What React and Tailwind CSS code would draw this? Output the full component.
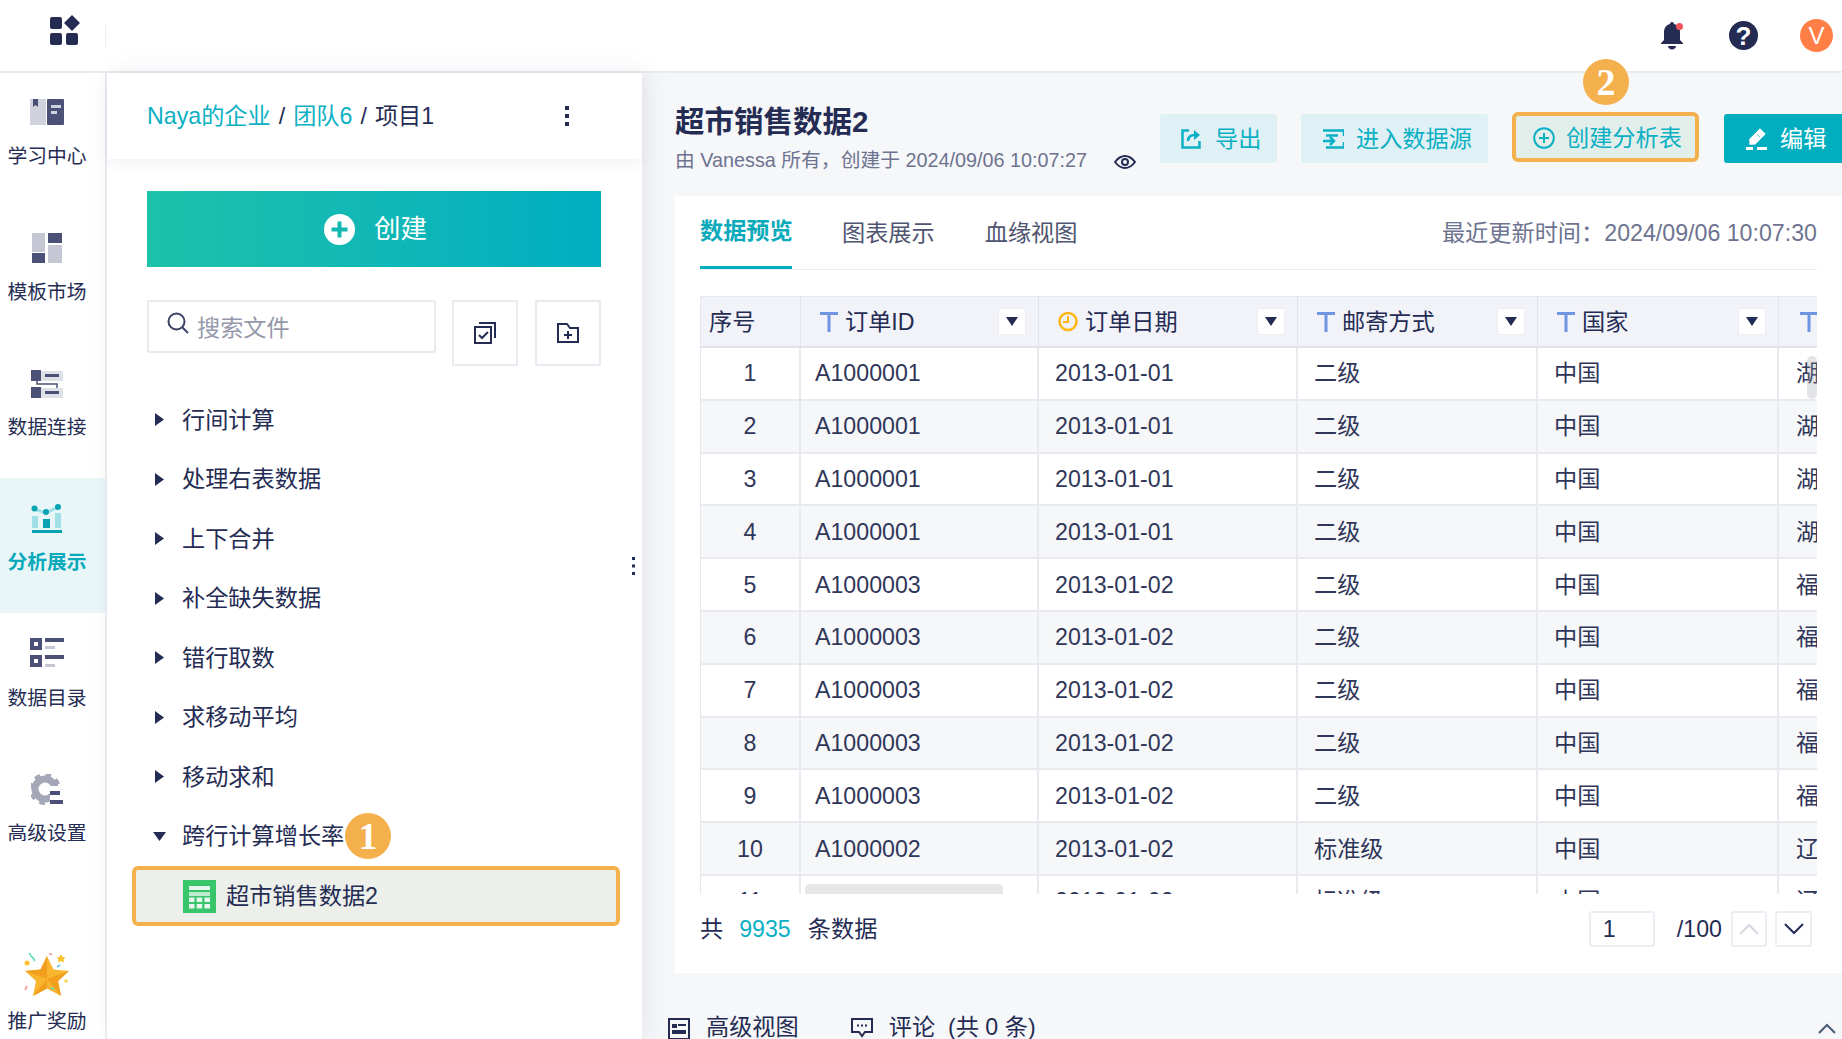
import React from "react";

const NAVY = "#252c54";

const BookIcon = () => (
  <svg width="34" height="26" viewBox="0 0 34 26">
    <rect x="0" y="0" width="16" height="26" fill="#d0d3de" />
    <path d="M3 0h5v8l-2.5-2L3 8z" fill="#4b5076" />
    <rect x="17" y="0" width="17" height="26" rx="1" fill="#4b5076" />
    <rect x="21" y="6" width="10" height="3" fill="#d0d3de" />
    <rect x="21" y="12" width="6" height="3" fill="#d0d3de" />
  </svg>
);

const TemplateIcon = () => (
  <svg width="30" height="30" viewBox="0 0 30 30">
    <rect x="0" y="0" width="13" height="19" fill="#c5c8d4" />
    <rect x="0" y="20" width="13" height="10" fill="#4b5076" />
    <rect x="16" y="0" width="14" height="10" fill="#4b5076" />
    <rect x="16" y="12" width="14" height="18" fill="#c5c8d4" />
  </svg>
);

const ConnectIcon = () => (
  <svg width="32" height="28" viewBox="0 0 32 28">
    <rect x="10" y="1" width="22" height="10" fill="#dfe1e9" />
    <rect x="10" y="18" width="22" height="10" fill="#dfe1e9" />
    <rect x="0" y="0" width="10" height="11" fill="#4b5076" />
    <rect x="0" y="17" width="10" height="11" fill="#4b5076" />
    <rect x="14" y="4" width="14" height="3" fill="#4b5076" />
    <rect x="14" y="21" width="14" height="3" fill="#4b5076" />
    <path d="M6 11v3h20v4" fill="none" stroke="#4b5076" strokeWidth="1.5" />
  </svg>
);

const AnalysisIcon = () => (
  <svg width="32" height="30" viewBox="0 0 32 30">
    <path d="M3 5l12 4 12-6" fill="none" stroke="#9fdfe6" strokeWidth="3" />
    <rect x="1" y="12" width="6" height="12" fill="#9fdfe6" />
    <rect x="12" y="15" width="7" height="9" fill="#05a3b4" />
    <rect x="24" y="9" width="6" height="15" fill="#9fdfe6" />
    <rect x="1" y="26" width="30" height="3" fill="#05a3b4" />
    <circle cx="3.5" cy="4.5" r="3" fill="#05a3b4" />
    <circle cx="15" cy="8" r="3" fill="#05a3b4" />
    <circle cx="27" cy="3" r="3" fill="#05a3b4" />
  </svg>
);

const CatalogIcon = () => (
  <svg width="34" height="30" viewBox="0 0 34 30">
    <rect x="2" y="2" width="8" height="8" fill="none" stroke="#4b5076" strokeWidth="4" />
    <rect x="2" y="19" width="8" height="8" fill="none" stroke="#4b5076" strokeWidth="4" />
    <rect x="15" y="0" width="19" height="4" fill="#4b5076" />
    <rect x="15" y="8" width="10" height="3" fill="#c5c8d4" />
    <rect x="15" y="17" width="19" height="4" fill="#4b5076" />
    <rect x="15" y="26" width="10" height="3" fill="#c5c8d4" />
  </svg>
);

const GearIcon = () => (
  <svg width="32" height="32" viewBox="0 0 32 32">
    <circle cx="14" cy="15" r="10" fill="none" stroke="#a4a7b8" strokeWidth="7" />
    <circle cx="14" cy="15" r="14" fill="none" stroke="#a4a7b8" strokeWidth="4" strokeDasharray="5.5 5.5" />
    <rect x="19" y="12" width="13" height="20" fill="#fff" />
    <rect x="19" y="17" width="10" height="4" fill="#4b5076" />
    <rect x="19" y="26" width="13" height="4" fill="#4b5076" />
  </svg>
);

const StarIcon = () => (
  <svg width="46" height="46" viewBox="0 0 46 46">
    <path d="M23 3l6.5 13.500L45 18l-11 10 3 15-14-7.500L9 43l3-15L1 18l15.500-1.500z" fill="#f9b52e" />
    <path d="M23 3v23L1 18l15.500-1.500zM45 18L23 26l14 17-3-15zM23 26L9 43l14-7.500z" fill="#f29f1e" />
    <path d="M5 0c2 1 1 3 3 4s2 3 3 4" fill="none" stroke="#4fe0b5" strokeWidth="1.5" />
    <path d="M25 0l3 2" stroke="#f58a8a" strokeWidth="1.5" />
    <path d="M37 1l1.500 3 3 .5-2 2 .5 3-3-1.500-3 1.500.5-3-2-2 3-.5z" fill="#fbc02d" />
    <circle cx="3" cy="10" r="2.5" fill="#fbc02d" />
    <path d="M33 14l3-2" stroke="#38bdf8" strokeWidth="1.5" />
    <circle cx="42" cy="28" r="1.8" fill="#fbd34d" />
    <path d="M3 33c-1 2-1 3-2 4" stroke="#f58a8a" strokeWidth="1.5" fill="none" />
    <path d="M27 35l3 1" stroke="#4fe0b5" strokeWidth="1.5" />
  </svg>
);

const navItems = [
  { label: "学习中心", icon: <BookIcon />, pad: "pt-[24px]", gap: "mt-[14px]" },
  { label: "模板市场", icon: <TemplateIcon />, pad: "pt-[25px]", gap: "mt-[14px]" },
  { label: "数据连接", icon: <ConnectIcon />, pad: "pt-[26px]", gap: "mt-[13px]" },
  { label: "分析展示", icon: <AnalysisIcon />, pad: "pt-[26px]", gap: "mt-[13px]", active: true },
  { label: "数据目录", icon: <CatalogIcon />, pad: "pt-[25px]", gap: "mt-[15px]" },
  { label: "高级设置", icon: <GearIcon />, pad: "pt-[27px]", gap: "mt-[13px]" },
];

const treeItems = ["行间计算", "处理右表数据", "上下合并", "补全缺失数据", "错行取数", "求移动平均", "移动求和"];

const rows = [
  [1, "A1000001", "2013-01-01", "二级", "中国", "湖"],
  [2, "A1000001", "2013-01-01", "二级", "中国", "湖"],
  [3, "A1000001", "2013-01-01", "二级", "中国", "湖"],
  [4, "A1000001", "2013-01-01", "二级", "中国", "湖"],
  [5, "A1000003", "2013-01-02", "二级", "中国", "福"],
  [6, "A1000003", "2013-01-02", "二级", "中国", "福"],
  [7, "A1000003", "2013-01-02", "二级", "中国", "福"],
  [8, "A1000003", "2013-01-02", "二级", "中国", "福"],
  [9, "A1000003", "2013-01-02", "二级", "中国", "福"],
  [10, "A1000002", "2013-01-02", "标准级", "中国", "辽"],
  [11, "A1000002", "2013-01-02", "标准级", "中国", "辽"],
];

const TIcon = () => (
  <svg width="18" height="20" viewBox="0 0 18 20" className="shrink-0">
    <path d="M0 1.500h18M9 1.500V20" fill="none" stroke="#6f95e2" strokeWidth="3" />
  </svg>
);

const ClockIcon = () => (
  <svg width="20" height="21" viewBox="0 0 20 21" className="shrink-0">
    <circle cx="10" cy="10.500" r="8.500" fill="none" stroke="#fdb614" strokeWidth="2.5" />
    <path d="M10 5v6H5" fill="none" stroke="#fdb614" strokeWidth="2" />
  </svg>
);

const Caret = () => (
  <div className="w-[28px] h-[27px] bg-white border border-[#eceef3] flex items-center justify-center">
    <svg width="12" height="9" viewBox="0 0 12 9">
      <path d="M0 0h12L6 9z" fill={NAVY} />
    </svg>
  </div>
);

const HeadCell = ({ icon, label }) => (
  <div className="h-[49px] flex items-center pl-[19px] border-r border-[#e2e4ea]">
    {icon}
    <span className="ml-[7px]">{label}</span>
    <div className="ml-auto mr-[12px]">
      <Caret />
    </div>
  </div>
);

const Badge = ({ n, className }) => (
  <div className={`absolute w-[46px] h-[46px] rounded-full bg-[#f5b04e] flex items-center justify-center text-white text-[38px] font-bold font-['Liberation_Serif',serif] ${className}`}>
    {n}
  </div>
);

const App = () => {
  return (
    <div className="w-full h-screen flex flex-col overflow-hidden bg-white text-[#252c54] text-[23.2px] leading-[30px] font-['Liberation_Sans','Noto_Sans_CJK_SC',sans-serif]">
      {/* top bar */}
      <div className="h-[73px] shrink-0 flex items-center border-b-2 border-[#e9ebef] bg-white">
        <div className="w-[107px] h-full flex items-start pt-[15px] pl-[50px]">
          <svg width="30" height="30" viewBox="0 0 30 30">
            <rect x="0" y="2" width="12" height="12" rx="2" fill={NAVY} />
            <rect x="0" y="18" width="12" height="12" rx="2" fill={NAVY} />
            <rect x="16" y="18" width="12" height="12" rx="2" fill={NAVY} />
            <path d="M22 0l8 8-8 8-8-8z" fill={NAVY} />
          </svg>
        </div>
        <div className="w-px h-[22px] bg-[#eceef2] -ml-[2px]" />
        <div className="ml-auto flex items-center pr-[9px]">
          <div className="relative w-[24px] h-[30px]">
            <svg width="24" height="30" viewBox="0 0 24 30">
              <path d="M12 1c1.500 0 2 1 2 2 4 1 6 4 6 8v8l3 3v1H1v-1l3-3v-8c0-4 2-7 6-8 0-1 .5-2 2-2z" fill={NAVY} />
              <path d="M8 25h8c0 2-2 3.500-4 3.500S8 27 8 25z" fill={NAVY} />
            </svg>
            <div className="absolute top-[2px] right-[1px] w-[7px] h-[7px] rounded-full bg-[#f0545c]" />
          </div>
          <div className="w-[29px] h-[29px] ml-[45px] rounded-full bg-[#252c54] text-white text-[26px] font-bold flex items-center justify-center">?</div>
          <div className="w-[33px] h-[33px] ml-[42px] rounded-full bg-[#ff7f47] text-white text-[24px] flex items-center justify-center">V</div>
        </div>
      </div>

      <div className="flex-1 flex min-h-0">
        {/* nav */}
        <div className="w-[107px] shrink-0 flex flex-col border-r-2 border-[#eceef2] text-[19.8px]">
          {navItems.map((item) => (
            <div
              key={item.label}
              className={`h-[135px] shrink-0 flex flex-col items-center pr-[11px] ${item.pad} ${item.active ? "bg-[#e8f6f8] text-[#0aaabb] font-bold" : ""}`}
            >
              <div className="h-[30px] flex items-center justify-center">{item.icon}</div>
              <div className={item.gap}>{item.label}</div>
            </div>
          ))}
          <div className="mt-auto pb-[3px] flex flex-col items-center pr-[11px]">
            <StarIcon />
            <div className="mt-[7px]">推广奖励</div>
          </div>
        </div>

        {/* file tree panel */}
        <div className="w-[535px] shrink-0 flex flex-col bg-white relative z-[1] shadow-[6px_0_24px_rgba(60,70,110,0.08)]">
          <div className="h-[86px] shrink-0 flex items-center pl-[40px] pr-[73px] shadow-[0_4px_12px_rgba(60,70,110,0.07)]">
            <span className="text-[#0cb0c4]">Naya的企业</span>
            <span className="mx-[8px]">/</span>
            <span className="text-[#0cb0c4]">团队6</span>
            <span className="mx-[8px]">/</span>
            <span>项目1</span>
            <svg width="4" height="20" viewBox="0 0 4 20" className="ml-auto">
              <rect x="0" y="0" width="4" height="4" fill={NAVY} />
              <rect x="0" y="8" width="4" height="4" fill={NAVY} />
              <rect x="0" y="16" width="4" height="4" fill={NAVY} />
            </svg>
          </div>

          <div className="pl-[40px] pr-[41px] pt-[32px]">
            <div className="h-[76px] flex items-center justify-center pl-[3px] bg-gradient-to-r from-[#1ec1a9] to-[#00aec1] text-white text-[26.5px]">
              <svg width="31" height="31" viewBox="0 0 31 31">
                <circle cx="15.5" cy="15.5" r="15.5" fill="#fff" />
                <path d="M15.500 7.500v16M7.500 15.500h16" stroke="#12b8b0" strokeWidth="4" />
              </svg>
              <span className="ml-[19px]">创建</span>
            </div>
            <div className="flex items-start mt-[33px]">
              <div className="w-[289px] h-[53px] flex items-center border-2 border-[#e8eaf0] rounded-[3px] pl-[18px]">
                <svg width="22" height="22" viewBox="0 0 22 22" className="-mt-[8px] shrink-0">
                  <circle cx="9.5" cy="9.5" r="8" fill="none" stroke="#3b4165" strokeWidth="2" />
                  <path d="M15 15l6 6" stroke="#3b4165" strokeWidth="2" />
                </svg>
                <span className="ml-[8px] text-[#9498ab] mt-[2px]">搜索文件</span>
              </div>
              <div className="w-[66px] h-[66px] ml-[16px] border-2 border-[#e8eaf0] flex items-center justify-center">
                <svg width="22" height="22" viewBox="0 0 22 22">
                  <rect x="1" y="5" width="16" height="16" fill="none" stroke={NAVY} strokeWidth="2" />
                  <path d="M5 1h16v15" fill="none" stroke={NAVY} strokeWidth="2" />
                  <path d="M5 13l3 3 6-6" fill="none" stroke={NAVY} strokeWidth="2" />
                </svg>
              </div>
              <div className="w-[66px] h-[66px] ml-[17px] border-2 border-[#e8eaf0] flex items-center justify-center">
                <svg width="22" height="20" viewBox="0 0 22 20">
                  <path d="M1 1h9l3 4h8v14H1z" fill="none" stroke={NAVY} strokeWidth="2" />
                  <path d="M11 8v8M7 12h8" stroke={NAVY} strokeWidth="2" />
                </svg>
              </div>
            </div>
          </div>

          <div className="mt-[24px] relative">
            {treeItems.map((name) => (
              <div key={name} className="h-[59.5px] flex items-center pl-[48px]">
                <svg width="9" height="13" viewBox="0 0 9 13">
                  <path d="M0 0l9 6.500L0 13z" fill={NAVY} />
                </svg>
                <span className="ml-[18px]">{name}</span>
              </div>
            ))}
            <div className="h-[59.5px] flex items-center pl-[46px]">
              <svg width="13" height="9" viewBox="0 0 13 9">
                <path d="M0 0h13L6.500 9z" fill={NAVY} />
              </svg>
              <span className="ml-[16px]">跨行计算增长率</span>
            </div>
            <Badge n="1" className="left-[238px] top-[423px]" />
          </div>

          <div className="ml-[25px] w-[488px] h-[60px] flex items-center pl-[47px] bg-[#ecefea] border-4 border-[#f5b04e] rounded-[6px]">
            <svg width="33" height="33" viewBox="0 0 33 33" className="shrink-0">
              <rect width="33" height="33" fill="#39c569" />
              <rect x="6" y="6" width="21" height="4" fill="#e7f7ed" />
              <rect x="6" y="12" width="21" height="4" fill="#bdeccd" />
              <path d="M6 17.500h5.500v4.500H6zM13.700 17.500h5.500v4.500h-5.500zM21.500 17.500H27v4.500h-5.500zM6 24h5.500v4.500H6zM13.700 24h5.500v4.500h-5.500zM21.500 24H27v4.500h-5.500z" fill="#e7f7ed" />
            </svg>
            <span className="ml-[10px]">超市销售数据2</span>
          </div>

          <svg width="3" height="18" viewBox="0 0 3 18" className="absolute left-[525px] top-[484px]">
            <rect width="3" height="3" fill={NAVY} />
            <rect y="7.5" width="3" height="3" fill={NAVY} />
            <rect y="15" width="3" height="3" fill={NAVY} />
          </svg>
        </div>

        {/* main */}
        <div className="flex-1 min-w-0 flex flex-col bg-[#f6f7f9] relative pl-[33px]">
          <div className="h-[123px] shrink-0 flex items-start">
            <div className="pt-[31px]">
              <div className="text-[29.5px] leading-[36px] font-bold">超市销售数据2</div>
              <div className="flex items-center mt-[5px] text-[19.8px] leading-[30px] text-[#6d7390]">
                <span>由 Vanessa 所有，创建于 2024/09/06 10:07:27</span>
                <svg width="22" height="14" viewBox="0 0 22 14" className="ml-[27px] mt-[4px]">
                  <path d="M1 7c3-4 6-6 10-6s7 2 10 6c-3 4-6 6-10 6S4 11 1 7z" fill="none" stroke={NAVY} strokeWidth="2" />
                  <circle cx="11" cy="7" r="3" fill="none" stroke={NAVY} strokeWidth="2" />
                </svg>
              </div>
            </div>
            <div className="ml-auto pt-[41px] flex items-start relative">
              <div className="w-[117px] h-[49px] flex items-center pl-[21px] rounded-[3px] bg-[#dff1f4] text-[#0cb0c4]">
                <svg width="20" height="20" viewBox="0 0 20 20" className="shrink-0">
                  <path d="M8 1.500H1.500v17h17V12" fill="none" stroke="#0cb0c4" strokeWidth="2.5" />
                  <path d="M7 12c0-4 3-6 7-6" fill="none" stroke="#0cb0c4" strokeWidth="2.5" />
                  <path d="M13 1l6 5-6 5z" fill="#0cb0c4" />
                </svg>
                <span className="ml-[14px]">导出</span>
              </div>
              <div className="w-[187px] h-[49px] ml-[24px] flex items-center pl-[22px] rounded-[3px] bg-[#dff1f4] text-[#0cb0c4]">
                <svg width="21" height="20" viewBox="0 0 21 20" className="shrink-0">
                  <path d="M0 1.500h21v5.500M3 6.500h12M21 13v5.500H3" fill="none" stroke="#0cb0c4" strokeWidth="2.5" />
                  <path d="M0 12h10M7 8l4 4-4 4" fill="none" stroke="#0cb0c4" strokeWidth="2.5" />
                </svg>
                <span className="ml-[12px]">进入数据源</span>
              </div>
              <div className="w-[187px] h-[50px] -mt-[2px] ml-[24px] flex items-center pl-[17px] pt-[1px] rounded-[6px] bg-[#e2eee9] border-4 border-[#f5b04e] text-[#0cb0c4]">
                <svg width="22" height="22" viewBox="0 0 22 22" className="shrink-0">
                  <circle cx="11" cy="11" r="9.8" fill="none" stroke="#0cb0c4" strokeWidth="2" />
                  <path d="M11 6v10M6 11h10" stroke="#0cb0c4" strokeWidth="2" />
                </svg>
                <span className="ml-[11px]">创建分析表</span>
              </div>
              <div className="w-[118px] h-[49px] ml-[25px] flex items-center pl-[22px] rounded-l-[3px] bg-[#00aebf] text-white">
                <svg width="21" height="22" viewBox="0 0 21 22" className="shrink-0">
                  <path d="M14 0l6 6L9 17H3v-6zM11 6l3 3" fill="#fff" stroke="#00aebf" strokeWidth="0.6" />
                  <path d="M11 19h10v3H11zM0 19h7v3H0z" fill="#fff" />
                </svg>
                <span className="ml-[13px]">编辑</span>
              </div>
              <Badge n="2" className="left-[423px] top-[-14px]" />
            </div>
          </div>

          <div className="h-[777px] shrink-0 bg-white pl-[25px] pr-[25px] flex flex-col">
            {/* tabs */}
            <div className="h-[74px] shrink-0 flex items-stretch border-b border-[#e9ebef]">
              <div className="w-[92px] flex items-center border-b-[3px] border-[#00aec1] text-[#0aaabb] font-bold whitespace-nowrap">数据预览</div>
              <div className="ml-[50px] flex items-center text-[#4f5570]">图表展示</div>
              <div className="ml-[50px] flex items-center text-[#4f5570]">血缘视图</div>
              <div className="ml-auto flex items-center text-[#6d7390]">最近更新时间：2024/09/06 10:07:30</div>
            </div>

            {/* table */}
            <div className="mt-[26px] h-[598px] shrink-0 relative overflow-hidden border-t border-[#e6e8ee]">
              <div className="grid grid-cols-[100px_238px_259px_240px_241px_39px] bg-[#f1f3f8] border-b-2 border-[#e0e2e8] border-l border-l-[#e6e8ee]">
                <div className="h-[49px] flex items-center pl-[8px] border-r border-[#e2e4ea]">序号</div>
                <HeadCell icon={<TIcon />} label="订单ID" />
                <HeadCell icon={<ClockIcon />} label="订单日期" />
                <HeadCell icon={<TIcon />} label="邮寄方式" />
                <HeadCell icon={<TIcon />} label="国家" />
                <div className="h-[49px] flex items-center pl-[21px]"><TIcon /></div>
              </div>
              {rows.map((row, i) => (
                <div
                  key={row[0]}
                  className={`grid grid-cols-[100px_238px_259px_240px_241px_39px] h-[52.8px] border-b-2 border-[#e8eaef] border-l border-l-[#e6e8ee] text-[#2f3659] ${i % 2 === 1 ? "bg-[#f6f7f9]" : "bg-white"}`}
                >
                  <div className="flex items-center justify-center border-r-2 border-[#e8eaef]">{row[0]}</div>
                  <div className="flex items-center pl-[14px] border-r-2 border-[#e8eaef]">{row[1]}</div>
                  <div className="flex items-center pl-[16px] border-r-2 border-[#e8eaef]">{row[2]}</div>
                  <div className="flex items-center pl-[16px] border-r-2 border-[#e8eaef]">{row[3]}</div>
                  <div className="flex items-center pl-[16px] border-r-2 border-[#e8eaef]">{row[4]}</div>
                  <div className="flex items-center pl-[17px] overflow-hidden whitespace-nowrap">{row[5]}</div>
                </div>
              ))}
              <div className="absolute left-[105px] bottom-0 w-[198px] h-[10px] rounded-t-[5px] bg-[#e6e7e9]" />
              <div className="absolute right-0 top-[59px] w-[10px] h-[43px] rounded-[5px] bg-[#8f929f]/25" />
            </div>

            {/* footer */}
            <div className="h-[70px] shrink-0 flex items-center">
              <span>共</span>
              <span className="ml-[16px] text-[#0cb0c4]">9935</span>
              <span className="ml-[17px]">条数据</span>
              <div className="ml-auto w-[66px] h-[36px] flex items-center pl-[12px] border-2 border-[#eceef3] rounded-[3px]">1</div>
              <span className="ml-[22px]">/100</span>
              <div className="w-[36px] h-[36px] ml-[9px] border-2 border-[#eceef3] rounded-[3px] flex items-center justify-center">
                <svg width="20" height="12" viewBox="0 0 20 12">
                  <path d="M1 11l9-9 9 9" fill="none" stroke="#d6d8e0" strokeWidth="2" />
                </svg>
              </div>
              <div className="w-[37px] h-[36px] ml-[8px] mr-[5px] border-2 border-[#eceef3] rounded-[3px] flex items-center justify-center">
                <svg width="20" height="12" viewBox="0 0 20 12">
                  <path d="M1 1l9 9 9-9" fill="none" stroke={NAVY} strokeWidth="2" />
                </svg>
              </div>
            </div>
          </div>

          {/* bottom bar */}
          <div className="-ml-[7px] pt-[39px] flex items-center pr-[6px]">
            <svg width="22" height="22" viewBox="0 0 22 22" className="mt-[4px] shrink-0">
              <rect x="1" y="1" width="20" height="20" fill="none" stroke={NAVY} strokeWidth="2" />
              <rect x="4" y="6" width="5" height="4" fill={NAVY} />
              <rect x="10" y="6" width="8" height="2" fill={NAVY} />
              <rect x="4" y="12" width="14" height="4" fill={NAVY} />
            </svg>
            <span className="ml-[16px]">高级视图</span>
            <svg width="22" height="20" viewBox="0 0 22 20" className="ml-[52px] mt-[2px] shrink-0">
              <path d="M1 1h20v13h-7l-3 4-3-4H1z" fill="none" stroke={NAVY} strokeWidth="2" />
              <path d="M6 7.500h2M10 7.500h2M14 7.500h2" stroke={NAVY} strokeWidth="2" />
            </svg>
            <span className="ml-[16px] whitespace-pre">评论  (共 0 条)</span>
            <svg width="18" height="11" viewBox="0 0 18 11" className="ml-auto mt-[2px]">
              <path d="M1 10l8-8 8 8" fill="none" stroke="#4b5b7a" strokeWidth="2" />
            </svg>
          </div>
        </div>
      </div>
    </div>
  );
};

export default App;
